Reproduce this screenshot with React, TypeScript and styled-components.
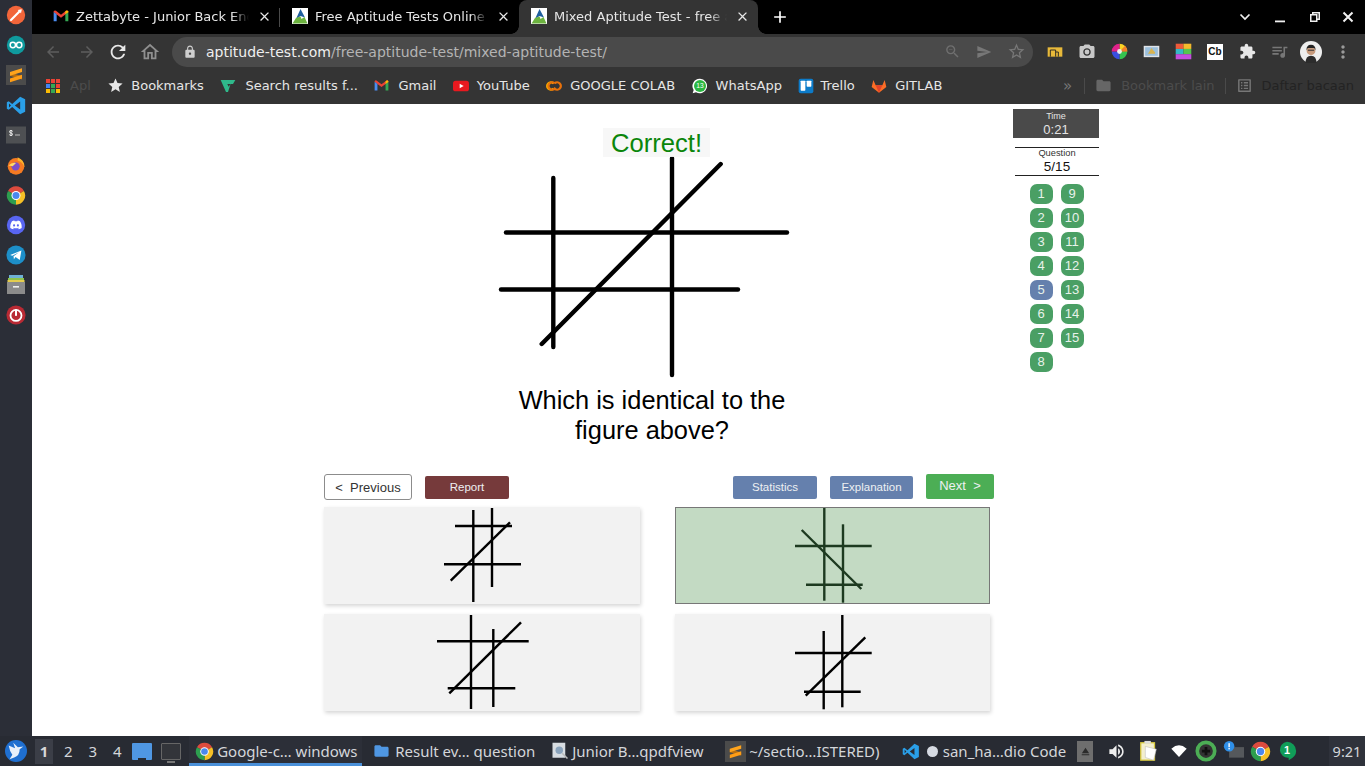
import React from "react";
import styled, { createGlobalStyle, css } from "styled-components";
import {
  MdArrowBack, MdArrowForward, MdRefresh, MdOutlineHome, MdLock, MdZoomOut, MdSend, MdStarBorder,
  MdExtension, MdMoreVert, MdClose, MdAdd, MdFolder, MdOutlineListAlt, MdStar,
  MdCameraAlt, MdQueueMusic, MdVolumeUp, MdEject,
} from "react-icons/md";

const Global = createGlobalStyle`
  html, body { margin: 0; padding: 0; width: 100%; height: 100%; overflow: hidden; background: #fff; }
  #root { width: 1365px; height: 766px; }
  * { box-sizing: border-box; }
`;

const Screen = styled.div`
  width: 1365px; height: 766px; display: grid; grid-template-rows: 736px 30px;
  font-family: "Liberation Sans", Arial, sans-serif;
`;
const Upper = styled.div`display: flex; min-height: 0;`;
const Dock = styled.nav`
  width: 32px; background: #2b2e37; display: flex; flex-direction: column; align-items: center;
  padding-top: 5px; gap: 10px; flex: none;
`;
const DockSlot = styled.div<{ $hl?: boolean }>`
  width: 20px; height: 20px; display: flex; align-items: center; justify-content: center;
  ${(p) => p.$hl && css`background: #4b4b4b;`}
  svg { display: block; }
`;
const Browser = styled.div`flex: 1; min-width: 0; display: flex; flex-direction: column;`;

const TabStrip = styled.div`height: 34px; background: #000; display: flex; align-items: stretch; padding-left: 9px; flex: none;`;
const Tab = styled.div<{ $active?: boolean; $sep?: boolean }>`
  width: 239px; position: relative; display: flex; align-items: center; padding: 0 8px 2px 12px; gap: 7px;
  font: 13px "DejaVu Sans", sans-serif; color: #e6e6e6;
  ${(p) => p.$active && css`
    background: #343434; border-radius: 8px 8px 0 0;
    &::before, &::after { content: ""; position: absolute; bottom: 0; width: 8px; height: 8px; }
    &::before { left: -8px; background: radial-gradient(circle at 0 0, #000 7.5px, #343434 8px); }
    &::after { right: -8px; background: radial-gradient(circle at 100% 0, #000 7.5px, #343434 8px); }
  `}
  ${(p) => p.$sep && css`
    &::after { content: ""; position: absolute; right: 0; top: 8px; height: 19px; width: 1px; background: #4a4a4a; }
  `}
`;
const TabTitle = styled.span`
  flex: 1; min-width: 0; white-space: nowrap; overflow: hidden;
  mask-image: linear-gradient(to right, #000 90%, transparent 100%);
`;
const TabClose = styled.span`width: 16px; height: 16px; display: flex; align-items: center; justify-content: center; color: #e8e8e8; flex: none;`;
const NewTab = styled.div`width: 28px; margin-left: 8px; padding-bottom: 1px; color: #fff; display: flex; align-items: center; justify-content: center;`;
const WinControls = styled.div`margin-left: auto; display: flex; align-items: center; color: #f0f0f0; padding-right: 1px;`;
const WinBtn = styled.span<{ $w: number }>`width: ${(p) => p.$w}px; display: flex; align-items: center; justify-content: center;`;

const Toolbar = styled.div`height: 35px; background: #343434; display: flex; align-items: center; padding: 0 6px 0 5px; flex: none;`;
const ToolBtn = styled.span<{ $color?: string; $mr?: number }>`
  width: 32px; height: 32px; display: flex; align-items: center; justify-content: center; flex: none;
  color: ${(p) => p.$color || "#e8e8e8"}; margin-right: ${(p) => p.$mr || 0}px;
`;
const Omnibox = styled.div`
  flex: 1; min-width: 0; height: 30px; border-radius: 15px; background: #4a4a4a; margin: 0 6px; display: flex; align-items: center;
  padding: 0 1px 0 11px; font: 14px "DejaVu Sans", sans-serif; color: #b4b4b4; gap: 9px;
`;
const LockBox = styled.span`color: #cfcfcf; display: flex;`;
const Url = styled.span`flex: 1; white-space: nowrap; b { font-weight: 400; color: #efefef; }`;
const OmniActions = styled.div`display: flex; color: #6f6f6f;`;

const Bookmarks = styled.div`
  height: 35px; background: #343434; display: flex; align-items: center; padding: 0 11px 2px 14px; gap: 16.5px;
  font: 13px "DejaVu Sans", sans-serif; color: #e6e6e6; flex: none;
`;
const Bookmark = styled.span<{ $gap?: number }>`display: flex; align-items: center; gap: ${(p) => p.$gap ?? 9}px; white-space: nowrap;`;
const Dim = styled.span<{ $dark?: boolean }>`color: ${(p) => (p.$dark ? "#232323" : "#4c4c4c")};`;
const BookmarkEnd = styled.div`margin-left: auto; display: flex; align-items: center; gap: 10px; color: #6e6e6e;`;
const BarSep = styled.span`width: 1px; height: 16px; background: #4a4a4a;`;
const Chevrons = styled.span`font-size: 15px; color: #777; margin-right: 2px;`;

const Page = styled.main`flex: 1; min-height: 0; background: #fff; display: flex; padding-left: 292px;`;
const Column = styled.section`width: 670px; flex: none; display: flex; flex-direction: column;`;
const Figure = styled.div`position: relative; width: 310px; height: 232px; margin: 46px 0 0 166px; svg { display: block; }`;
const Badge = styled.div`
  position: absolute; left: 113px; top: -22px; width: 107px; height: 29px; background: rgba(246,246,246,.93);
  color: #0b860b; font-size: 25.6px; line-height: 31px; text-align: center;
`;
const Prompt = styled.h2`
  margin: 3px 0 0 178px; width: 300px; text-align: center; font: 400 25.4px/30px "Liberation Sans", Arial, sans-serif; color: #000;
`;
const Actions = styled.div`display: flex; align-items: flex-start; height: 26px; margin-top: 29px; gap: 13px;`;
const Outline = styled.button`
  width: 88px; height: 26px; border: 1px solid #8c8c8c; border-radius: 3px; background: #fff; color: #333;
  font: 13px "Liberation Sans", Arial, sans-serif; padding: 0; white-space: pre;
`;
const Flat = styled.button<{ $bg: string; $w: number; $next?: boolean }>`
  width: ${(p) => p.$w}px; height: 23px; margin-top: 2px; border: 0; border-radius: 2px; background: ${(p) => p.$bg};
  color: #eef0f2; font: 11.5px "Liberation Sans", Arial, sans-serif; padding: 0 0 1px; white-space: pre;
  ${(p) => p.$next && css`height: 25px; margin-top: 0; font-size: 13px; padding-bottom: 3px;`}
`;
const Spacer = styled.span`flex: 1;`;
const Cards = styled.div`display: grid; grid-template-columns: 316px 315px; grid-auto-rows: 97px; column-gap: 35px; row-gap: 10px; margin-top: 7px;`;
const Card = styled.div<{ $sel?: boolean }>`
  background: ${(p) => (p.$sel ? "#c3dac3" : "#f2f2f2")};
  ${(p) => p.$sel ? css`outline: 1px solid #777; outline-offset: -1px;` : css`box-shadow: 1px 2px 4px rgba(0,0,0,.17);`}
  svg { display: block; }
`;

const Side = styled.aside`width: 86px; margin-left: 19px; padding-top: 5px; flex: none;`;
const TimeBox = styled.div`
  height: 29px; background: #4a4a4a; color: #e4e4e4; display: flex; flex-direction: column; align-items: center; padding-top: 2px;
`;
const Small = styled.span`font-size: 9px; line-height: 10px;`;
const Clock = styled.span`font-size: 13px; line-height: 16px; margin-top: 1px;`;
const QuestionBox = styled.div`
  height: 29px; margin: 9px 0 0 2px; border-top: 1px solid #222; border-bottom: 1px solid #222; display: flex; flex-direction: column; align-items: center; color: #111;
`;
const QLabel = styled.span`font-size: 9.3px; line-height: 10px; color: #333;`;
const QValue = styled.span`font-size: 13.5px; line-height: 16px; margin-top: 1px;`;
const Pills = styled.div`
  display: grid; grid-auto-flow: column; grid-template-rows: repeat(8, 20px); grid-template-columns: 23px 23px; gap: 4px 8px; margin: 8px 0 0 17px;
`;
const Pill = styled.span<{ $cur?: boolean }>`
  border-radius: 7px; background: ${(p) => (p.$cur ? "#6580ad" : "#4a9f64")}; color: #e8f2ea; font-size: 13px; line-height: 20px; text-align: center; padding-right: 1px;
`;

const Taskbar = styled.footer`
  background: #282b33; display: flex; align-items: center; font: 15px "Noto Sans", sans-serif; color: #d4d6da; padding-left: 5px;
`;
const StartBtn = styled.span`width: 22px; height: 22px; display: flex;`;
const Workspaces = styled.div`display: flex; margin-left: 8px; gap: 6.4px;`;
const Ws = styled.span<{ $on?: boolean }>`
  width: 18px; height: 25px; line-height: 25px; text-align: center;
  ${(p) => p.$on && css`background: #3b3e47; font-weight: 700; color: #d8d8d8;`}
`;
const Thumbs = styled.div`display: flex; gap: 9px; margin: 0 8px 0 6px;`;
const Thumb = styled.span<{ $on?: boolean }>`
  width: 20px; height: 17px; position: relative; border-radius: 1px;
  ${(p) => p.$on
    ? css`background: #4f97e3; &::after { content: ""; position: absolute; left: 6px; bottom: 0; width: 8px; height: 2px; background: #282b33; }`
    : css`background: #33353a; border: 1px solid #666; &::after { content: ""; position: absolute; left: 5px; bottom: -4px; width: 8px; height: 2px; background: #777; }`}
`;
const Task = styled.div<{ $w: number; $on?: boolean }>`
  width: ${(p) => p.$w}px; height: 30px; display: flex; align-items: center; gap: 3px; padding-left: 6px; white-space: nowrap; flex: none;
  ${(p) => p.$on && css`box-shadow: inset 0 -3px 0 #4a90d9; background: #2c2f38; margin-right: 5px;`}
`;
const Bullet = styled.span`width: 11px; height: 11px; border-radius: 50%; background: #d6dae2; margin: 0 2px 0 4px; flex: none;`;
const Tray = styled.div`margin-left: auto; display: flex; align-items: center; height: 30px;`;
const TraySlot = styled.span<{ $w: number }>`width: ${(p) => p.$w}px; display: flex; align-items: center; justify-content: center; color: #eee;`;
const EjectBox = styled.span`width: 16px; height: 21px; background: #6e6e6e; color: #2b2b2b; display: flex; align-items: center; justify-content: center;`;
const ClockBox = styled.span`width: 36px; height: 30px; margin-left: 29px; background: #2f323b; line-height: 30px; text-align: center; font-size: 14.5px;`;
const CbBadge = styled.span`
  width: 16px; height: 16px; background: #fff; color: #111; font: 700 10px/16px "Liberation Sans", Arial, sans-serif; text-align: center;
`;
const FolderFix = styled.span`width: 17px; display: flex; margin-right: 2px;`;
const SublimeBox = styled.span`width: 21px; height: 21px; background: #4b4b4b; display: flex; align-items: center; justify-content: center;`;

const IconBase = ({ s = 16, children, vb = "0 0 24 24" }: { s?: number; vb?: string; children: React.ReactNode }) => (
  <svg width={s} height={s} viewBox={vb}>{children}</svg>
);
const Gmail = ({ s = 16 }: { s?: number }) => (
  <IconBase s={s}>
    <path d="M1 6.5 L12 14.5 L23 6.5 V5 Q21.5 3 19.5 4.2 L12 10 L4.5 4.2 Q2.5 3 1 5 Z" fill="#ea4335" />
    <path d="M1 6 V20 H5.5 V9.5 Z" fill="#4a8cf0" />
    <path d="M23 6 V20 H18.5 V9.5 Z" fill="#34a853" />
    <path d="M18.5 9.5 L23 6.2 V5 Q21.5 3 19.5 4.2 L18.5 5 Z" fill="#fbbc04" />
  </IconBase>
);
const Aptitude = () => (
  <IconBase s={16} vb="0 0 16 16">
    <rect width="16" height="16" fill="#fff" />
    <path d="M8.5 1 L13 9.5 L8.5 8 L4 11 Z" fill="#1f5f9e" />
    <path d="M0.5 15.5 L4 10 L8.5 8.5 L9.5 11 L12.5 9 L15.5 15.5 Z" fill="#6cb33f" />
  </IconBase>
);
const Chrome = ({ s = 20 }: { s?: number }) => (
  <IconBase s={s}>
    <path d="M12 12 L2.47 6.5 A11 11 0 0 1 21.53 6.5 Z" fill="#dd4b3e" />
    <path d="M12 12 L21.53 6.5 A11 11 0 0 1 12 23 Z" fill="#f6c026" />
    <path d="M12 12 L12 23 A11 11 0 0 1 2.47 6.5 Z" fill="#2d9e4f" />
    <circle cx="12" cy="12" r="5.4" fill="#fff" />
    <circle cx="12" cy="12" r="4.2" fill="#4a88ee" />
  </IconBase>
);
const Sublime = ({ s = 18 }: { s?: number }) => (
  <IconBase s={s}>
    <path d="M4 8.500 L20 13.500 V18 L4 13 Z" fill="#b86f10" />
    <path d="M4 8 L20 3 V8 L4 13 Z" fill="#ffa41c" />
    <path d="M4 16.500 L20 11.500 V16.500 L4 21.500 Z" fill="#ff9d16" />
  </IconBase>
);
const VsCode = ({ s = 20 }: { s?: number }) => (
  <IconBase s={s}>
    <path fillRule="evenodd" d="M17 1.5 L23 4.5 V19.5 L17 22.5 L7.5 13.8 L3.2 17 L1 15.8 V8.2 L3.2 7 L7.5 10.2 Z M17 7.2 L10.6 12 L17 16.8 Z M3.6 9.7 V14.3 L6 12 Z" fill="#2a9fe8" />
  </IconBase>
);
const Figures = {
  main: { vb: "490 150 310 232", sw: 4.4, v: [[553.3, 178, 347], [672, 158, 375]], h: [[232.5, 506, 787], [289.5, 501, 738]], d: [541.7, 344, 720.7, 164] },
  a: { vb: "324 507 316 97", sw: 2.4, v: [[473.3, 510, 602], [492, 508, 587]], h: [[526, 455, 512], [564.3, 444, 521]], d: [450.7, 580.7, 510, 522.3] },
  b: { vb: "675 507 315 97", sw: 2.4, v: [[824.3, 507.7, 600.7], [843, 524.3, 602.7]], h: [[546, 795, 871.7], [584.7, 806, 862.7]], d: [801.7, 530, 861.3, 589] },
  c: { vb: "324 614 316 97", sw: 2.4, v: [[471, 615, 709], [493.3, 629, 707]], h: [[641.3, 437, 528.7], [688.3, 447.7, 515.3]], d: [449.3, 693.3, 521, 622.3] },
  d: { vb: "675 614 315 97", sw: 2.4, v: [[823.7, 631, 709.3], [842.3, 615, 707.3]], h: [[653, 795, 871.7], [691.7, 804, 860.7]], d: [805.7, 695.7, 865.3, 637.3] },
};
const Drawing = ({ f, w, h, color = "#000" }: { f: keyof typeof Figures; w: number; h: number; color?: string }) => {
  const g = Figures[f];
  const cap = f === "main" ? "round" : "butt";
  return (
    <svg width={w} height={h} viewBox={g.vb}>
      <g stroke={color} strokeWidth={g.sw} strokeLinecap={cap as "round"} fill="none">
        {g.v.map((l, i) => <line key={i} x1={l[0]} x2={l[0]} y1={l[1]} y2={l[2]} />)}
        {g.h.map((l, i) => <line key={i} y1={l[0]} y2={l[0]} x1={l[1]} x2={l[2]} />)}
        <line x1={g.d[0]} y1={g.d[1]} x2={g.d[2]} y2={g.d[3]} />
      </g>
    </svg>
  );
};

function DiscordPath() {
  return <path fill="#fff" d="M524.5 69.8a1.5 1.5 0 0 0-.8-.7A485 485 0 0 0 404 32a1.8 1.8 0 0 0-1.9.9 338 338 0 0 0-14.9 30.6 447.800 447.800 0 0 0-134.400 0 310 310 0 0 0-15.100-30.600 1.900 1.900 0 0 0-1.900-.9A483.700 483.700 0 0 0 116.100 69a1.700 1.700 0 0 0-.8.700C39.100 183.700 18.200 294.700 28.400 404.400a2 2 0 0 0 .8 1.400A487.700 487.700 0 0 0 176 479.900a1.900 1.900 0 0 0 2.100-.7 348.200 348.200 0 0 0 30-48.800 1.900 1.900 0 0 0-1-2.600 321.200 321.200 0 0 1-45.900-21.800 1.900 1.900 0 0 1-.2-3.100c3.100-2.300 6.200-4.700 9.100-7.100a1.800 1.800 0 0 1 1.900-.3c96.200 43.900 200.400 43.900 295.500 0a1.800 1.800 0 0 1 1.900.2c2.900 2.400 6 4.900 9.100 7.200a1.900 1.900 0 0 1-.2 3.100 301.400 301.400 0 0 1-45.900 21.800 1.900 1.900 0 0 0-1 2.600 391.100 391.100 0 0 0 30 48.800 1.900 1.900 0 0 0 2.100.700A486 486 0 0 0 610.700 405.700a1.900 1.900 0 0 0 .8-1.400C623.700 277.600 590.900 167.500 524.500 69.800zM222.500 337.600c-29 0-52.800-26.600-52.800-59.200S193.100 219.100 222.500 219.100c29.700 0 53.300 26.800 52.800 59.200C275.300 311 251.900 337.600 222.500 337.600zm195.400 0c-29 0-52.800-26.600-52.800-59.200S388.400 219.100 417.900 219.100c29.700 0 53.300 26.800 52.800 59.200C470.700 311 447.500 337.600 417.900 337.600z" />;
}

const DockIcons = () => (
  <Dock>
    <DockSlot>
      <IconBase s={22}><circle cx="12" cy="12" r="11" fill="#f2653a" /><path d="M6 18 L17 7" stroke="#fff" strokeWidth="2.6" strokeLinecap="round" /><path d="M14 6 L19 5 L18 10 Z" fill="#fff" /></IconBase>
    </DockSlot>
    <DockSlot>
      <IconBase s={22}><circle cx="12" cy="12" r="11" fill="#0f9a9e" /><g fill="none" stroke="#fff" strokeWidth="1.8"><circle cx="8.2" cy="12" r="3.2" /><circle cx="15.8" cy="12" r="3.2" /></g></IconBase>
    </DockSlot>
    <DockSlot $hl><Sublime s={18} /></DockSlot>
    <DockSlot><VsCode s={21} /></DockSlot>
    <DockSlot>
      <IconBase s={20} vb="0 0 20 20"><rect width="20" height="17" y="1.5" fill="#4e5053" /><path d="M5 5 V11 M3.5 6.5 Q3.5 5.5 5 5.5 Q6.5 5.5 6.5 6.5 M3.5 9.5 Q3.5 10.5 5 10.5 Q6.5 10.5 6.5 9.5 M3.5 6.5 Q3.5 8 5 8 Q6.5 8 6.5 9.5" stroke="#eee" strokeWidth="1" fill="none" /><rect x="9" y="9.5" width="5" height="1" fill="#bbb" /></IconBase>
    </DockSlot>
    <DockSlot>
      <IconBase s={21}><circle cx="12" cy="13" r="10" fill="#f57a22" /><path d="M14 2 Q23 6 22 14 Q20 8 14 6 Z" fill="#fbb32b" /><circle cx="11.5" cy="13" r="5" fill="#7a4fc9" /><path d="M3 12 Q7 8 12 9 L8 13 Z" fill="#fbdc6a" /></IconBase>
    </DockSlot>
    <DockSlot><Chrome s={21} /></DockSlot>
    <DockSlot>
      <IconBase s={22}><circle cx="12" cy="12" r="11" fill="#5865f2" /><g transform="translate(4.5 6) scale(0.0234)"><DiscordPath /></g></IconBase>
    </DockSlot>
    <DockSlot>
      <IconBase s={20}><circle cx="12" cy="12" r="11.5" fill="#1d8fc9" /><path d="M5 12 L18.5 6.5 L16.5 18 L11.5 14.5 L9.5 17 L9 13.6 L15.5 8.8 L7.6 13 Z" fill="#fff" /></IconBase>
    </DockSlot>
    <DockSlot>
      <IconBase s={20} vb="0 0 20 20"><rect x="3" y="0" width="14" height="3" fill="#6fb1d6" /><rect x="2" y="3" width="16" height="2" fill="#8ec34e" /><rect x="1.5" y="5" width="17" height="2" fill="#e4cd4f" /><rect x="1" y="7" width="18" height="12" fill="#8b8b8b" /><rect x="7" y="11" width="6" height="1.6" fill="#eee" /></IconBase>
    </DockSlot>
    <DockSlot>
      <IconBase s={20}><circle cx="12" cy="12" r="11.5" fill="#b92a34" /><circle cx="12" cy="12.5" r="6.6" fill="none" stroke="#fff" strokeWidth="2.2" /><rect x="10.8" y="5" width="2.4" height="8" fill="#fff" /></IconBase>
    </DockSlot>
  </Dock>
);

const numbers = Array.from({ length: 15 }, (_, i) => i + 1);

export default function App() {
  return (
    <Screen>
      <Global />
      <Upper>
        <DockIcons />
        <Browser>
          <TabStrip>
            <Tab $sep><Gmail /><TabTitle>Zettabyte - Junior Back End</TabTitle><TabClose><MdClose size={15} /></TabClose></Tab>
            <Tab><Aptitude /><TabTitle>Free Aptitude Tests Online</TabTitle><TabClose><MdClose size={15} /></TabClose></Tab>
            <Tab $active><Aptitude /><TabTitle>Mixed Aptitude Test - free a</TabTitle><TabClose><MdClose size={15} /></TabClose></Tab>
            <NewTab><MdAdd size={20} /></NewTab>
            <WinControls>
              <WinBtn $w={33}><IconBase s={12} vb="0 0 12 12"><path d="M1.500 3.500 L6 8 L10.500 3.500" fill="none" stroke="currentColor" strokeWidth="1.700" /></IconBase></WinBtn>
              <WinBtn $w={37}><IconBase s={12} vb="0 0 12 12"><rect x="1" y="9.500" width="10" height="1.800" fill="currentColor" /></IconBase></WinBtn>
              <WinBtn $w={33}><IconBase s={12} vb="0 0 12 12"><path fillRule="evenodd" d="M3 1 H11 V9 H8.500 V11 H1 V3 H3 Z M4.500 2.500 V3 H8.500 V7.500 H9.500 V2.500 Z M2.500 4.500 V9.500 H7 V4.500 Z" fill="currentColor" /></IconBase></WinBtn>
              <WinBtn $w={33}><IconBase s={12} vb="0 0 12 12"><path d="M1.500 1.500 L10.500 10.500 M10.500 1.500 L1.500 10.500" stroke="currentColor" strokeWidth="2" /></IconBase></WinBtn>
            </WinControls>
          </TabStrip>
          <Toolbar>
            <ToolBtn $color="#5d5d5d" $mr={2}><MdArrowBack size={18} /></ToolBtn>
            <ToolBtn $color="#5d5d5d" $mr={-1}><MdArrowForward size={18} /></ToolBtn>
            <ToolBtn><MdRefresh size={22} /></ToolBtn>
            <ToolBtn $color="#8f8f8f"><MdOutlineHome size={22} /></ToolBtn>
            <Omnibox>
              <LockBox><MdLock size={14} /></LockBox>
              <Url><b>aptitude-test.com</b>/free-aptitude-test/mixed-aptitude-test/</Url>
              <OmniActions>
                <ToolBtn $color="#6f6f6f"><MdZoomOut size={17} /></ToolBtn>
                <ToolBtn $color="#777"><MdSend size={16} /></ToolBtn>
                <ToolBtn $color="#777"><MdStarBorder size={19} /></ToolBtn>
              </OmniActions>
            </Omnibox>
            <ToolBtn>
              <IconBase s={16}><rect x="1" y="5" width="22" height="14" fill="#e8b93a" /><path d="M5 19 V9 H13 V19 M13 12 H17 V19" stroke="#222" strokeWidth="1.4" fill="none" /></IconBase>
            </ToolBtn>
            <ToolBtn $color="#c8c8c8"><MdCameraAlt size={18} /></ToolBtn>
            <ToolBtn>
              <svg width="17" height="17" viewBox="0 0 24 24">
                <path d="M12 12 L12 1 A11 11 0 0 1 23 12 Z" fill="#f9d423" /><path d="M12 12 L23 12 A11 11 0 0 1 12 23 Z" fill="#35c24f" />
                <path d="M12 12 L12 23 A11 11 0 0 1 1 12 Z" fill="#3a4fe0" /><path d="M12 12 L1 12 A11 11 0 0 1 12 1 Z" fill="#e0218a" />
                <path d="M12 12 L20 4 A11 11 0 0 1 23 12 Z" fill="#f0802a" /><circle cx="12" cy="12" r="3.4" fill="#eee" />
              </svg>
            </ToolBtn>
            <ToolBtn>
              <IconBase s={17}><rect x="1" y="4" width="22" height="16" fill="#dfe3e8" /><rect x="3" y="6" width="18" height="12" fill="#9cc0dc" /><path d="M7 15 L12 7 L14 10 L17 13 V15 Z" fill="#d9b34e" /></IconBase>
            </ToolBtn>
            <ToolBtn>
              <IconBase s={17}><rect x="1" y="1" width="11" height="7.400" fill="#ee5a3a" /><rect x="12" y="1" width="11" height="7.400" fill="#f4b92c" /><rect x="1" y="8.400" width="11" height="7.400" fill="#35b8c8" /><rect x="12" y="8.400" width="11" height="7.400" fill="#55c84f" /><rect x="1" y="15.800" width="22" height="7.200" fill="#c44fe0" /></IconBase>
            </ToolBtn>
            <ToolBtn><CbBadge>Cb</CbBadge></ToolBtn>
            <ToolBtn><MdExtension size={17} /></ToolBtn>
            <ToolBtn $color="#777"><MdQueueMusic size={19} /></ToolBtn>
            <ToolBtn>
              <IconBase s={22}><circle cx="12" cy="12" r="12" fill="#eee" /><path d="M6 24 Q6 16 12 16 Q18 16 18 24 Z" fill="#2c2c2c" /><circle cx="12" cy="10.500" r="4.800" fill="#c79a7c" /><path d="M7 10 Q7 4 12 4 Q17 4 17 10 L15.500 7.500 H8.500 Z" fill="#222" /><rect x="8.600" y="9.500" width="6.800" height="1.100" fill="#333" /></IconBase>
            </ToolBtn>
            <ToolBtn $color="#9a9a9a"><MdMoreVert size={20} /></ToolBtn>
          </Toolbar>
          <Bookmarks>
            <Bookmark $gap={10}>
              <IconBase s={14} vb="0 0 14 14">
                {[0, 5, 10].flatMap((y, r) => [0, 5, 10].map((x, c) => (
                  <rect key={`${r}${c}`} x={x} y={y} width="4" height="4" fill={[["#ea4335", "#ea4335", "#ea4335"], ["#4285f4", "#34a853", "#ea4335"], ["#fbbc04", "#34a853", "#fbbc04"]][r][c]} />
                )))}
              </IconBase>
              <Dim>Apl</Dim>
            </Bookmark>
            <Bookmark $gap={7}><MdStar size={17} color="#e8e8e8" />Bookmarks</Bookmark>
            <Bookmark>
              <IconBase s={16}><path d="M1 3 H23 L19.500 9 H11 L13 13 L16 8.800 L12 21 Z M1 3 L12 21 L9 21 Z" fill="#2fb98b" /></IconBase>
              Search results f...
            </Bookmark>
            <Bookmark><Gmail s={15} />Gmail</Bookmark>
            <Bookmark $gap={8}>
              <IconBase s={16}><rect x="0" y="4" width="24" height="16" rx="4" fill="#e8191f" /><path d="M10 8.500 L16 12 L10 15.500 Z" fill="#fff" /></IconBase>
              YouTube
            </Bookmark>
            <Bookmark $gap={8}>
              <IconBase s={16}><g fill="none" strokeWidth="3.400"><path d="M11 8 A5.500 5.500 0 1 0 11 16" stroke="#f9ab00" /><path d="M13 8 A5.500 5.500 0 1 1 13 16 A5.500 5.500 0 1 1 13 8" stroke="#e8710a" /></g></IconBase>
              GOOGLE COLAB
            </Bookmark>
            <Bookmark $gap={8}>
              <IconBase s={16}><path d="M12 1 A11 11 0 1 1 6 21.500 L1 23 L2.500 18 A11 11 0 0 1 12 1 Z" fill="#fff" /><circle cx="12" cy="12" r="9" fill="#2bb741" /><text x="12" y="15.500" fontSize="10" fill="#fff" textAnchor="middle" fontFamily="Liberation Sans">13</text></IconBase>
              WhatsApp
            </Bookmark>
            <Bookmark $gap={6}>
              <IconBase s={16}><rect x="1" y="1" width="22" height="22" rx="3" fill="#0c7bc9" /><rect x="4" y="4" width="7" height="15" rx="1" fill="#fff" /><rect x="13" y="4" width="7" height="9" rx="1" fill="#fff" /></IconBase>
              Trello
            </Bookmark>
            <Bookmark $gap={8}>
              <IconBase s={16}><path d="M12 22 L1 13.500 L3.500 3 L7 11 H17 L20.500 3 L23 13.500 Z" fill="#fc6d26" /><path d="M12 22 L7 11 H17 Z" fill="#e24329" /></IconBase>
              GITLAB
            </Bookmark>
            <BookmarkEnd>
              <Chevrons>»</Chevrons>
              <BarSep />
              <Bookmark><MdFolder size={17} color="#666" /><Dim>Bookmark lain</Dim></Bookmark>
              <BarSep />
              <Bookmark><MdOutlineListAlt size={17} color="#777" /><Dim $dark>Daftar bacaan</Dim></Bookmark>
            </BookmarkEnd>
          </Bookmarks>
          <Page>
            <Column>
              <Figure>
                <Drawing f="main" w={310} h={232} />
                <Badge>Correct!</Badge>
              </Figure>
              <Prompt>Which is identical to the<br />figure above?</Prompt>
              <Actions>
                <Outline>{"<  Previous"}</Outline>
                <Flat $bg="#763a3b" $w={84}>Report</Flat>
                <Spacer />
                <Flat $bg="#6580ad" $w={84}>Statistics</Flat>
                <Flat $bg="#6580ad" $w={83}>Explanation</Flat>
                <Flat $bg="#4cae55" $w={68} $next>{"Next  >"}</Flat>
              </Actions>
              <Cards>
                <Card><Drawing f="a" w={316} h={97} /></Card>
                <Card $sel><Drawing f="b" w={315} h={97} color="#1d3a20" /></Card>
                <Card><Drawing f="c" w={316} h={97} /></Card>
                <Card><Drawing f="d" w={315} h={97} /></Card>
              </Cards>
            </Column>
            <Side>
              <TimeBox><Small>Time</Small><Clock>0:21</Clock></TimeBox>
              <QuestionBox><QLabel>Question</QLabel><QValue>5/15</QValue></QuestionBox>
              <Pills>{numbers.map((n) => <Pill key={n} $cur={n === 5}>{n}</Pill>)}</Pills>
            </Side>
          </Page>
        </Browser>
      </Upper>
      <Taskbar>
        <StartBtn>
          <IconBase s={22}><circle cx="12" cy="12" r="12" fill="#1f6fd0" /><path d="M4 6 L11 9 L9 3 L14 8 L20 7 L16 10 Q16 17 10 19 L5 21 L8 16 Q5 12 4 6 Z" fill="#e8f0fa" /></IconBase>
        </StartBtn>
        <Workspaces>
          <Ws $on>1</Ws><Ws>2</Ws><Ws>3</Ws><Ws>4</Ws>
        </Workspaces>
        <Thumbs><Thumb $on /><Thumb /></Thumbs>
        <Task $w={173} $on><Chrome s={19} />Google-c… windows</Task>
        <Task $w={178}>
          <FolderFix><MdFolder size={18} color="#4f97e3" /></FolderFix>Result ev… question
        </Task>
        <Task $w={174}>
          <IconBase s={18}><rect x="2" y="1" width="17" height="20" fill="#d8dde2" /><circle cx="11" cy="11" r="5" fill="#8aa3bc" /><path d="M15 15 L22 22" stroke="#bbb" strokeWidth="2" /></IconBase>
          Junior B…qpdfview
        </Task>
        <Task $w={177}>
          <SublimeBox><Sublime s={17} /></SublimeBox>~/sectio…ISTERED)
        </Task>
        <Task $w={170}>
          <VsCode s={19} /><Bullet />san_ha…dio Code
        </Task>
        <Tray>
          <TraySlot $w={30}><EjectBox><MdEject size={13} /></EjectBox></TraySlot>
          <TraySlot $w={33}><MdVolumeUp size={19} /></TraySlot>
          <TraySlot $w={32}>
            <IconBase s={22}><rect x="3" y="3" width="15" height="19" fill="#f3efcf" stroke="#d8c93e" strokeWidth="1.400" /><rect x="7" y="1" width="7" height="3" fill="#ddd" /><path d="M8 7 L20 10 L17 22 L8 19 Z" fill="#fff" stroke="#bbb" strokeWidth=".6" /></IconBase>
          </TraySlot>
          <TraySlot $w={27}>
            <IconBase s={16}><path d="M12 21 L0.500 8.500 Q12 -1.500 23.500 8.500 Z" fill="#fff" /></IconBase>
          </TraySlot>
          <TraySlot $w={27}>
            <IconBase s={22}><circle cx="12" cy="12" r="9.500" fill="#333" stroke="#4cae55" strokeWidth="4" /><path d="M12 7.500 V16.500 M7.500 12 H16.500" stroke="#111" strokeWidth="3" /></IconBase>
          </TraySlot>
          <TraySlot $w={28}>
            <IconBase s={21}><rect x="7" y="7" width="17" height="12" fill="#55585c" /><circle cx="7" cy="6" r="6" fill="#2f8fe8" /><rect x="6.200" y="2.500" width="1.600" height="4.600" fill="#fff" /><rect x="6.200" y="8" width="1.600" height="1.600" fill="#fff" /></IconBase>
          </TraySlot>
          <TraySlot $w={27}><Chrome s={21} /></TraySlot>
          <TraySlot $w={26}>
            <IconBase s={20}><path d="M12 1 A11 11 0 0 1 23 12 Q23 19 14 23 V20 A9 9 0 0 1 12 1 Z" fill="#109d58" /><text x="12" y="16" fontSize="13" fontWeight="700" fill="#fff" textAnchor="middle" fontFamily="Liberation Sans">1</text></IconBase>
          </TraySlot>
          <ClockBox>9:21</ClockBox>
        </Tray>
      </Taskbar>
    </Screen>
  );
}
